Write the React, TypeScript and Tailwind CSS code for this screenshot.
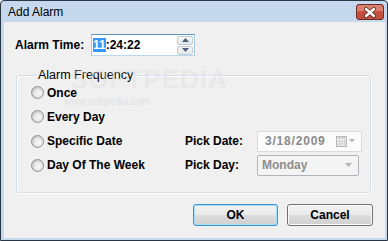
import React from 'react';

const Radio: React.FC<{ label: string }> = ({ label }) => (
  <div className="flex items-center gap-[3px]">
    <span className="w-[13px] h-[13px] rounded-full border border-[#8e8f8f] bg-[linear-gradient(135deg,#c4c4c4,#f4f4f4)] flex items-center justify-center">
      <span className="w-[7px] h-[7px] rounded-full bg-[linear-gradient(135deg,#e2e2e2,#fbfbfb)]" />
    </span>
    <span className="font-bold text-[12px] text-black">{label}</span>
  </div>
);

const SpinArrow: React.FC<{ up?: boolean }> = ({ up }) => (
  <span className="w-[16px] h-[9px] border border-[#c3cbd4] rounded-[2px] bg-[linear-gradient(#f6f7f8,#e4e7ea)] flex items-center justify-center">
    <svg width="7" height="4" viewBox="0 0 7 4">
      {up ? <path d="M0 4 L3.5 0 L7 4 Z" fill="#4a5d7e" /> : <path d="M0 0 L3.5 4 L7 0 Z" fill="#4a5d7e" />}
    </svg>
  </span>
);

export default function App() {
  return (
    <div className="w-[388px] h-[241px] border border-[#2a3646] rounded-t-[4px] bg-[#c6d8ed] flex flex-col font-['Liberation_Sans',Arial,sans-serif] overflow-hidden">
      {/* title bar */}
      <div className="h-[21px] shrink-0 flex items-center justify-between pl-[7px] pr-[3px] pt-[1px]">
        <span className="text-[12px] text-black leading-none">Add Alarm</span>
        <div className="shrink-0 w-[28px] h-[16px] rounded-[3px] border border-[#6d2b26] bg-[#c24f40] shadow-[inset_0_6px_0_#d9806f] flex items-center justify-center">
          <svg width="14" height="11" viewBox="0 0 14 11">
            <path d="M3 2 L11 9 M11 2 L3 9" stroke="#5a2a22" strokeWidth="4" strokeLinecap="round" />
            <path d="M3 2 L11 9 M11 2 L3 9" stroke="#ffffff" strokeWidth="2.4" strokeLinecap="round" />
          </svg>
        </div>
      </div>

      {/* body */}
      <div className="relative flex-1 ml-[3px] mr-[2px] mb-[2px] bg-[#f0f0f0] flex flex-col">
        {/* alarm time */}
        <div className="flex items-center h-[22px] mt-[12px] ml-[11px]">
          <span className="w-[76px] font-bold text-[12px] text-black">Alarm Time:</span>
          <div className="w-[104px] h-[22px] border border-[#a9c8e2] border-t-[#5c93bc] border-b-[#b7d9ed] bg-white flex items-center justify-between pl-[1px] pr-[1px]">
            <span className="font-bold text-[12px] text-black leading-[15px]">
              <span className="bg-[#3399ff] text-white">11</span>:24:22
            </span>
            <span className="flex flex-col gap-px">
              <SpinArrow up />
              <SpinArrow />
            </span>
          </div>
        </div>

        {/* group box */}
        <div className="mt-[19px] ml-[12px] w-[355px] h-[118px] border border-[#d5dfe5] rounded-[3px] shadow-[inset_1px_1px_0_#ffffff,1px_1px_0_#ffffff] flex flex-col pl-[14px]">
          <span className="-mt-[9px] ml-[6px] px-[1px] self-start bg-[#f0f0f0] text-[12.5px] text-black leading-[16px]">Alarm Frequency</span>
          <div className="h-[23px] -mt-[2px] flex items-center">
            <Radio label="Once" />
          </div>
          <div className="h-[25px] flex items-center">
            <Radio label="Every Day" />
          </div>
          <div className="h-[24px] flex items-center">
            <div className="w-[154px]">
              <Radio label="Specific Date" />
            </div>
            <span className="w-[72px] font-bold text-[12px] text-black">Pick Date:</span>
            <div className="w-[105px] h-[21px] border border-[#dadada] bg-[#fbfbfb] flex items-center justify-between pl-[7px] pr-[6px]">
              <span className="font-bold text-[12px] text-[#8a8a8a] tracking-[0.8px]">3/18/2009</span>
              <span className="flex items-center gap-[2px]">
                <svg width="11" height="11" viewBox="0 0 11 11">
                  <rect x="0.5" y="0.5" width="10" height="10" fill="#f4f4f4" stroke="#b4b4b4" />
                  <rect x="0.5" y="0.5" width="10" height="2" fill="#c9c9c9" />
                  <path d="M3.5 3 V10 M6 3 V10 M8.5 3 V10 M1 5.5 H10 M1 8 H10" stroke="#cfcfcf" strokeWidth="1" />
                </svg>
                <svg width="6" height="4" viewBox="0 0 6 4">
                  <path d="M0 0 L3 3.5 L6 0 Z" fill="#b8b8b8" />
                </svg>
              </span>
            </div>
          </div>
          <div className="h-[24px] flex items-center">
            <div className="w-[154px]">
              <Radio label="Day Of The Week" />
            </div>
            <span className="w-[72px] font-bold text-[12px] text-black">Pick Day:</span>
            <div className="w-[102px] h-[21px] border border-[#b1b4b8] rounded-[2px] bg-[#f4f4f4] flex items-center justify-between pl-[4px] pr-[6px]">
              <span className="font-bold text-[12px] text-[#8d8d8d]">Monday</span>
              <svg width="7" height="4" viewBox="0 0 7 4">
                <path d="M0 0 L3.5 4 L7 0 Z" fill="#b3b3b3" />
              </svg>
            </div>
          </div>
        </div>

        {/* buttons */}
        <div className="mt-[11px] flex justify-end gap-[9px] pr-[12px]">
          <button className="w-[85px] h-[22px] rounded-[3px] border border-[#3c92d8] shadow-[inset_0_0_0_1px_#a6e2fb] bg-[linear-gradient(#f3f3f3,#e9e9e9_50%,#dcdcdc_50%,#d0d0d0)] font-bold text-[12px] text-black">
            OK
          </button>
          <button className="w-[86px] h-[22px] rounded-[3px] border border-[#707070] shadow-[inset_0_0_0_1px_#fbfbfb] bg-[linear-gradient(#f3f3f3,#e9e9e9_50%,#dcdcdc_50%,#d0d0d0)] font-bold text-[12px] text-black">
            Cancel
          </button>
        </div>

        {/* watermark */}
        <span className="absolute left-[66px] top-[38px] text-[26px] font-bold tracking-[1px] text-[#dcdcdc]/40 pointer-events-none">
          SOFTPEDIA
        </span>
        <span className="absolute left-[60px] top-[72px] text-[10px] text-[#d4d4d4]/60 pointer-events-none">
          www.softpedia.com
        </span>
      </div>
    </div>
  );
}
